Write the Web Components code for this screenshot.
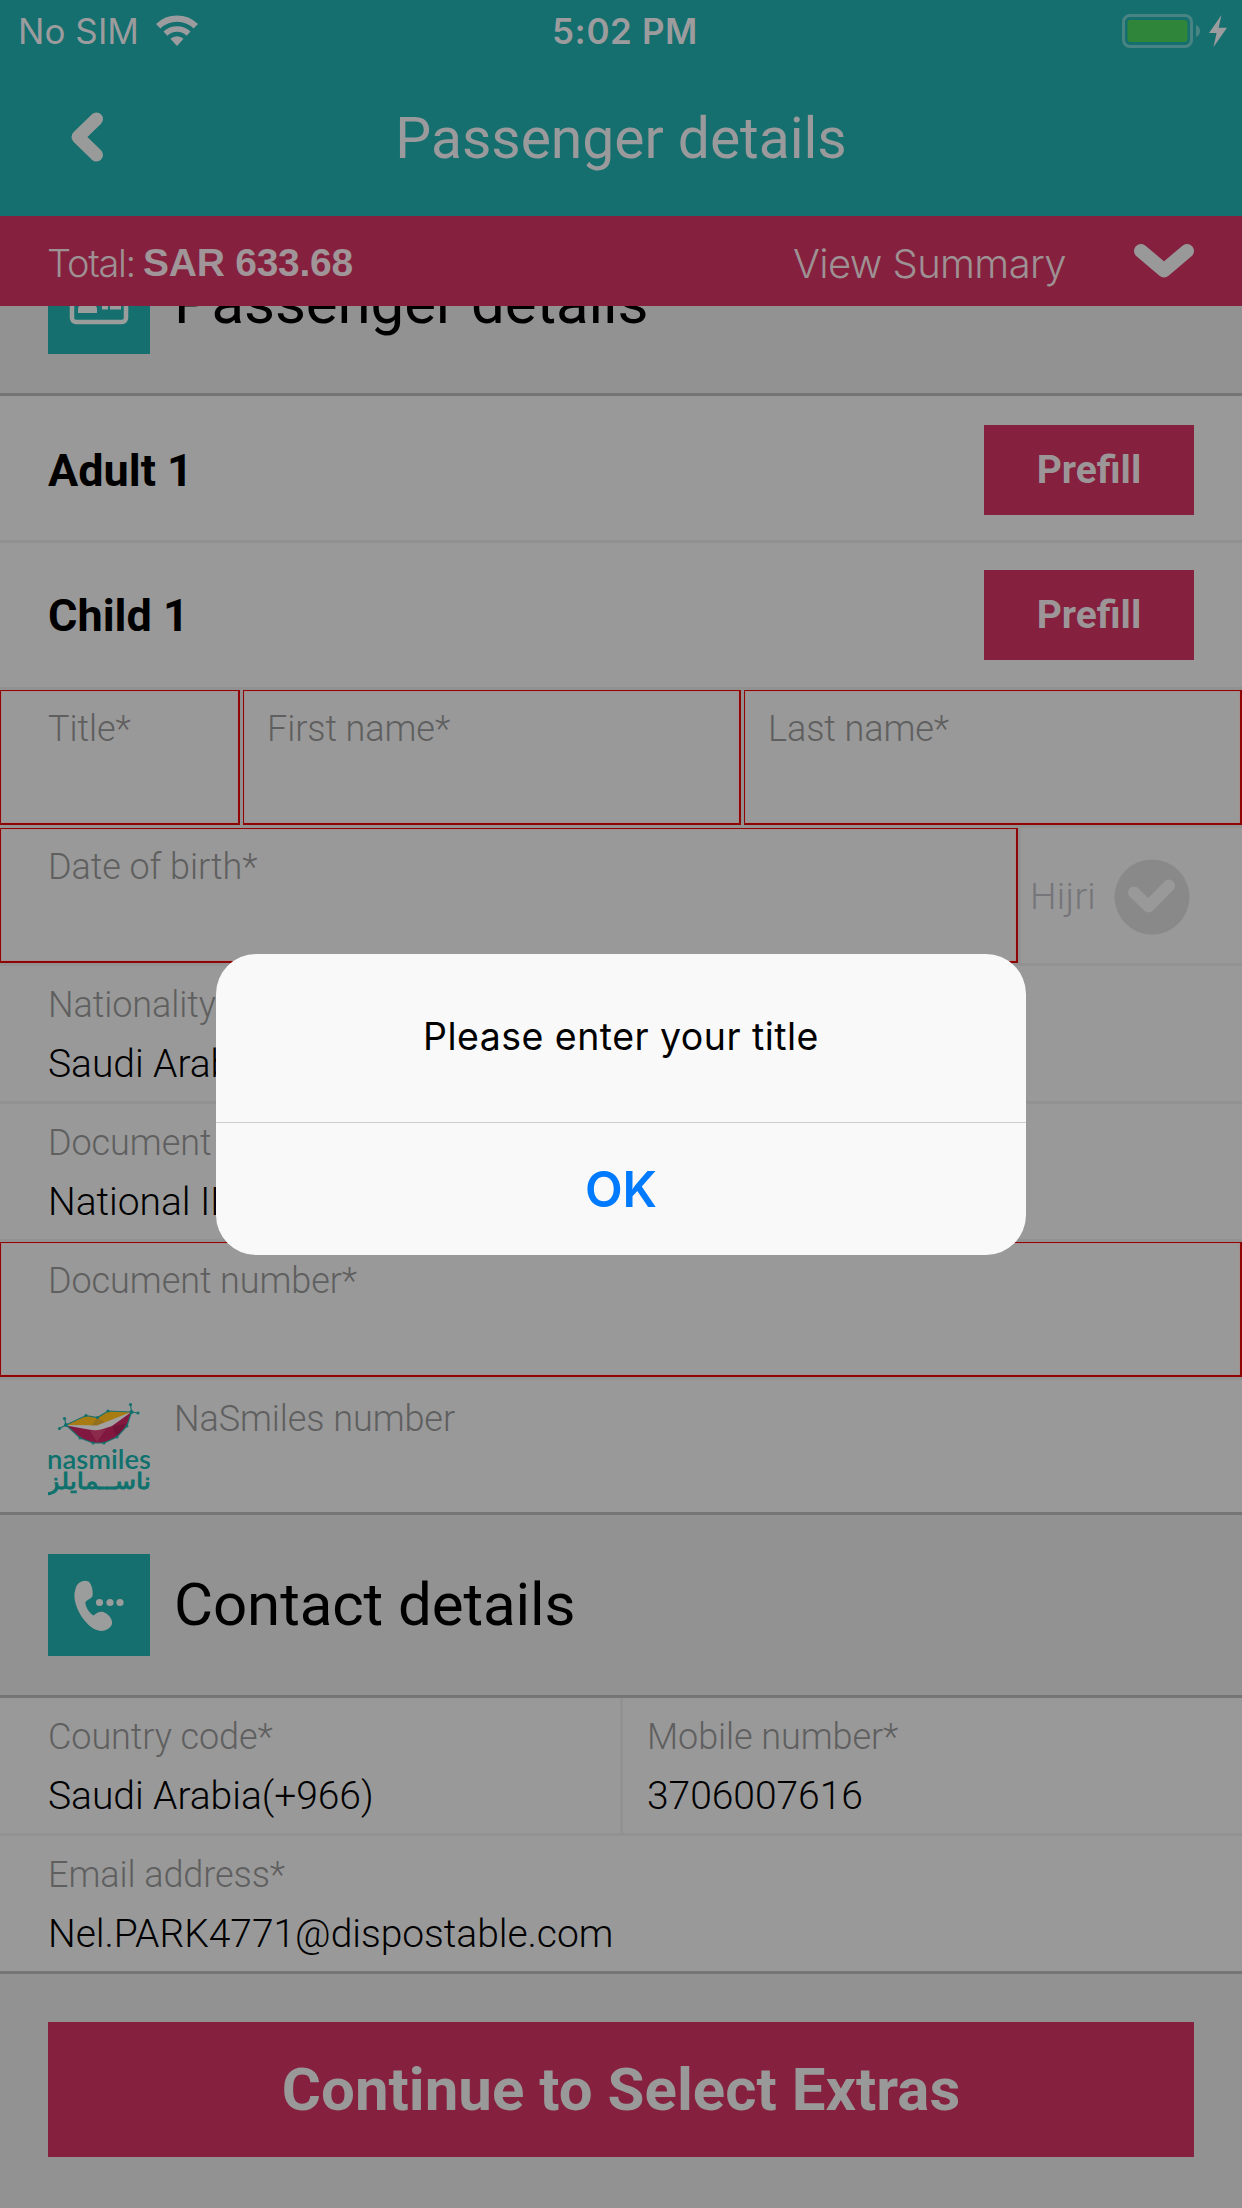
<!DOCTYPE html>
<html lang="en">
<head>
<meta charset="utf-8">
<title>Passenger details</title>
<style>
  html, body { margin: 0; padding: 0; }
  body { width: 1242px; height: 2208px; overflow: hidden; background: #929292; font-family: Roboto, sans-serif; }
</style>
</head>
<body>
<passenger-app></passenger-app>
<script>
const define = (name, html, setup) => customElements.define(name, class extends HTMLElement {
  connectedCallback() {
    if (this.shadowRoot) return;
    const t = document.createElement('template');
    t.innerHTML = html;
    this.attachShadow({ mode: 'open' }).append(t.content.cloneNode(true));
    if (setup) setup(this, this.shadowRoot);
  }
});

/* Single line of text whose tracking is tuned so its advance equals the "w" attribute. */
define('fit-text', `<style>:host{display:inline-block;white-space:pre}span{display:inline-block}</style><span><slot></slot></span>`,
  (el, root) => {
    const w = parseFloat(el.getAttribute('w'));
    const n = el.textContent.length;
    if (!w || !n) return;
    const natural = root.querySelector('span').getBoundingClientRect().width;
    el.style.letterSpacing = ((w - natural) / n).toFixed(3) + 'px';
  });

define('status-bar', `<style>
  :host{display:flex;height:60px;align-items:center;justify-content:space-between;color:#9c9c9e;font-family:Inter,sans-serif;font-size:35px;line-height:60px;padding:2px 15px 0 18px;box-sizing:border-box}
  .l,.r{display:flex;align-items:center;flex:1 1 0}.r{justify-content:flex-end;gap:8px}.l{gap:17px}
  .c{font-weight:600;flex:none;padding-left:5px} svg{display:block}
</style>
<div class="l"><fit-text w="121">No SIM</fit-text>
<svg width="42" height="32" viewBox="0 0 42 32"><g fill="none" stroke="#9c9c9e"><path d="M2.2 11.2 A27 27 0 0 1 39.8 11.2" stroke-width="6.4"/><path d="M9.4 18.6 A16.8 16.8 0 0 1 32.6 18.6" stroke-width="5.6"/></g><path d="M14.4 23.8 A9.6 9.6 0 0 1 27.6 23.8 L21 31Z" fill="#9c9c9e"/></svg></div>
<div class="c"><fit-text w="146">5:02 PM</fit-text></div>
<div class="r"><svg width="79" height="34" viewBox="0 0 79 34"><rect x="1.5" y="1.5" width="68" height="31" rx="6.5" fill="none" stroke="#488483" stroke-width="3"/><rect x="5.500" y="6" width="60" height="22" rx="3" fill="#2f863a"/><path d="M74 11 Q78 12.500 78 17 Q78 21.500 74 23Z" fill="#488483"/></svg>
<svg width="18" height="32" viewBox="0 0 18 32"><path d="M12.500 0 L0 18 H7.600 L4.500 32 L18 12.700 H9.600Z" fill="#9c9c9e"/></svg></div>`);

define('nav-bar', `<style>
  :host{display:grid;grid-template-columns:174px 1fr 174px;height:156px;align-items:center;color:#9a9a9c;font-size:57px;line-height:68px;letter-spacing:-.04px;box-sizing:border-box}
  svg{display:block;margin-left:70px;margin-top:-3px}
  .t{text-align:center;padding-top:1px}
</style><svg width="34" height="50" viewBox="0 0 34 50"><path d="M26.500 7 L8 25 L26.500 43" fill="none" stroke="#999b9b" stroke-width="13" stroke-linecap="round" stroke-linejoin="round"/></svg>
<div class="t"><slot></slot></div>`);

define('summary-bar', `<style>
  :host{display:flex;height:90px;background:#85213f;color:#9e9194;padding:3px 48px 0 47px;box-sizing:border-box;align-items:center;font-family:Inter,sans-serif;font-weight:300;line-height:50px}
  .a{font-size:38px}.b{font:700 39px/50px "Liberation Sans",sans-serif;color:#a09598;margin-left:8px}
  .v{font-size:40px;margin-left:auto;padding-top:3px}
  svg{margin-left:68px;margin-top:-4px;display:block}
</style><span class="a"><fit-text w="88">Total:</fit-text></span><span class="b"><fit-text w="210">SAR 633.68</fit-text></span>
<span class="v"><fit-text w="273">View Summary</fit-text></span>
<svg width="60" height="34" viewBox="0 0 60 34"><path d="M7 7 L30 26.500 L53 7" fill="none" stroke="#999" stroke-width="14" stroke-linecap="round" stroke-linejoin="round"/></svg>`);

define('section-head', `<style>
  :host{display:flex;height:183px;box-sizing:border-box;border-bottom:3px solid #757575;background:#929292;align-items:center;padding:0 48px;gap:24px;color:#000;font-size:60px;line-height:70px;letter-spacing:-.08px}
  .i{width:102px;height:102px;background:#156f6e}
</style><div class="i"><slot name="icon"></slot></div><slot></slot>`);

define('id-icon', `<style>:host{display:block}svg{display:block}</style>
<svg width="102" height="102" viewBox="0 0 102 102"><rect x="24" y="29" width="54" height="41" rx="4" fill="none" stroke="#9b9d9d" stroke-width="4.500"/><path d="M30 61 V57 Q30 53 35 53 L37 50 H42 L44 53 Q49 53 49 57 V61Z" fill="#9b9d9d"/><circle cx="39.500" cy="45" r="6" fill="#9b9d9d"/><path d="M56 44 H73 M54 55.500 H60 M62 55.500 H73" stroke="#9b9d9d" stroke-width="4"/></svg>`);

define('phone-icon', `<style>:host{display:block}svg{display:block}</style>
<svg width="102" height="102" viewBox="8 14 102 102" fill="#9b9d9d"><path d="M35.500 49 C37 42 44 39.500 48.500 41.500 C52 44 53.300 52 52.500 56 C51 59.500 46 59.500 45.300 63 C46 68 49.500 73 53.500 75.500 C57 72.500 60 71 63.500 72 C68.500 74 73 79.500 72 84 C70.500 89 64 91.800 58.500 90.600 C46 87.500 33 67 34.500 53Z"/><circle cx="59.500" cy="62.500" r="3.600"/><circle cx="70" cy="62.500" r="3.600"/><circle cx="80" cy="62.500" r="3.600"/></svg>`);

define('nasmiles-logo', `<style>:host{display:block}svg{display:block}</style>
<svg width="102" height="100" viewBox="18 10 102 100">
<path d="M36 35 L56 25.500 L67.500 27.500 L78 21 L101.500 22 L67 36Z" fill="#a87c12"/>
<path d="M67.500 27.500 L61 36 H67 L75 32.500Z" fill="#93701f"/>
<path d="M36 35 L67 35.600 L101.500 22 L82 37 L67 42.500Z" fill="#a3a0a0"/>
<path d="M36 35.500 L67 41 L82 36 L101.500 22 L97 36 L87 47 L74 53 H63 L50 48Z" fill="#801840"/>
<path d="M60 41 L67 52 L76 39Z" fill="#8c2a4c"/><path d="M82 36 L87 47 L97 34Z" fill="#711438"/>
<path d="M36 35 L56 25.500 L67.500 27.500 L78 21 L101.500 22 L97 36 L87 47 L74 53 H63 L50 48Z M34.500 28 L36 35 L29.500 38.500 M100.500 14.500 L101.500 22 L108 23" fill="none" stroke="#1b716e" stroke-width="1.200"/>
<g fill="#12706d"><circle cx="34.500" cy="28.500" r="1.600"/><circle cx="29.500" cy="38.500" r="1.600"/><circle cx="36" cy="35" r="2"/><circle cx="56" cy="25.500" r="1.600"/><circle cx="67.500" cy="27.500" r="1.500"/><circle cx="78" cy="21" r="1.600"/><circle cx="101.500" cy="22" r="2"/><circle cx="100.500" cy="14.500" r="1.600"/><circle cx="108" cy="23" r="1.600"/><circle cx="97" cy="36" r="1.500"/><circle cx="87" cy="47" r="1.500"/><circle cx="74" cy="53" r="1.500"/><circle cx="63" cy="53" r="1.500"/><circle cx="50" cy="48" r="1.500"/></g>
<text x="17" y="78.500" font-family="Lato,sans-serif" font-weight="600" font-size="26" textLength="104" lengthAdjust="spacingAndGlyphs" fill="#0f716d">nasmiles</text>
<text x="69" y="98.500" text-anchor="middle" font-family="DejaVu Sans,sans-serif" font-size="23" textLength="104" lengthAdjust="spacingAndGlyphs" fill="#0f716d" stroke="#0f716d" stroke-width=".9">ناســمايلز</text>
</svg>`);

define('pax-row', `<style>
  :host{display:flex;height:147px;box-sizing:border-box;border-bottom:3px solid #919191;padding:4px 48px 0;align-items:center;justify-content:space-between;background:#999;font-weight:700;font-size:45px;line-height:54px;color:#000}
  :host([tight]){padding-top:0}
  span{padding-top:1px}
  button{all:unset;width:210px;height:90px;background:#85213f;color:#9c9698;font-size:39px;line-height:90px;text-align:center}
</style><span><slot></slot></span><button>Prefill</button>`);

define('form-row', `<style>:host{display:flex;height:138px;gap:3px;box-sizing:border-box;border-bottom:3px solid #929292;background:#929292}
:host([end]){height:135px;border-bottom-color:#757575}:host([close]){border-bottom-color:#757575}
:host([plain]){background:#999}</style><slot></slot>`);

define('form-field', `<style>
  :host{display:block;flex:1 1 0;min-width:0;background:#999;box-sizing:border-box;padding:18px 24px 0;overflow:hidden;white-space:nowrap}
  :host([first]){padding-left:48px}
  :host([error]){border:solid #8f0505;border-width:1px 2px 2px 1px;padding-top:17px;padding-left:23px;box-shadow:inset 0 0 0 1px #a38f8f}
  :host([error][first]){padding-left:47px}
  .l{font-weight:300;font-size:36px;line-height:42px;letter-spacing:-.08px;color:#5f5f5f}
  .v{font-weight:300;font-size:39px;line-height:46px;letter-spacing:-.05px;margin-top:15px;color:#000}
</style><div class="l"></div><div class="v"><slot></slot></div>`,
  (el, root) => { root.querySelector('.l').textContent = el.getAttribute('label'); });

define('hijri-toggle', `<style>
  :host{display:flex;width:221px;flex:none;align-items:center;box-sizing:border-box;background:#999;padding:2px 0 0 9px;font-weight:300;font-size:37.500px;line-height:44px;color:#75757a}
  fit-text{margin-top:-1px}
  svg{margin-left:18px;display:block}
</style><fit-text w="66">Hijri</fit-text><svg width="76" height="76" viewBox="0 0 76 76"><circle cx="38" cy="38" r="37.500" fill="#898989"/><path d="M20 33.500 L34.500 47.500 L55 26.500" fill="none" stroke="#999" stroke-width="12" stroke-linecap="round" stroke-linejoin="round"/></svg>`);

define('cta-button', `<style>:host{display:block;padding:48px 48px 0}button{all:unset;display:block;width:100%;height:135px;background:#85213f;color:#999;text-align:center;font-weight:700;font-size:60px;line-height:135px}</style><button><slot></slot></button>`);

define('alert-dialog', `<style>
  :host{position:absolute;left:216px;top:954px;width:810px;height:301px;border-radius:40px;background:#f9f9f9;overflow:hidden;display:flex;flex-direction:column;font-family:Inter,sans-serif;text-align:center}
  .m{flex:none;box-sizing:border-box;padding-top:59px;font-size:37.500px;line-height:48px;letter-spacing:.46px;color:#000;border-bottom:1px solid #cfcfd3;height:169px}
  .k{flex:1;font-weight:600;font-size:49px;line-height:134px;color:#007aff}
</style><div class="m"><slot></slot></div><div class="k"><fit-text w="72">OK</fit-text></div>`);

define('passenger-app', `<style>
  :host{display:block;position:relative;width:1242px;height:2208px;overflow:hidden;background:#929292}
  header{background:#156f6e}
  main{display:flow-root;overflow:hidden}
  .first{margin-top:-93px}
  .logo{width:151px;background:#999;padding:20px 0 0 48px;box-sizing:border-box;flex:none}
</style>
<header><status-bar></status-bar><nav-bar>Passenger details</nav-bar></header>
<summary-bar></summary-bar>
<main>
  <section-head class="first"><id-icon slot="icon"></id-icon>Passenger details</section-head>
  <pax-row>Adult 1</pax-row>
  <pax-row tight>Child 1</pax-row>
  <form-row><form-field first error label="Title*" style="flex:0 0 240px"></form-field><form-field error label="First name*"></form-field><form-field error label="Last name*"></form-field></form-row>
  <form-row style="gap:0"><form-field first error label="Date of birth*"></form-field><hijri-toggle style="margin-left:3px"></hijri-toggle></form-row>
  <form-row><form-field first label="Nationality*">Saudi Arabia</form-field></form-row>
  <form-row><form-field first label="Document type*">National ID</form-field></form-row>
  <form-row><form-field first error label="Document number*"></form-field></form-row>
  <form-row end plain style="gap:0"><div class="logo"><nasmiles-logo></nasmiles-logo></div><form-field label="NaSmiles number" style="padding-left:23px"></form-field></form-row>
  <section-head><phone-icon slot="icon"></phone-icon>Contact details</section-head>
  <form-row><form-field first label="Country code*">Saudi Arabia(+966)</form-field><form-field label="Mobile number*" style="flex:0 0 619px">3706007616</form-field></form-row>
  <form-row close><form-field first label="Email address*">Nel.PARK4771@dispostable.com</form-field></form-row>
  <cta-button>Continue to Select Extras</cta-button>
</main>
<alert-dialog>Please enter your title</alert-dialog>`);
</script>
</body>
</html>
